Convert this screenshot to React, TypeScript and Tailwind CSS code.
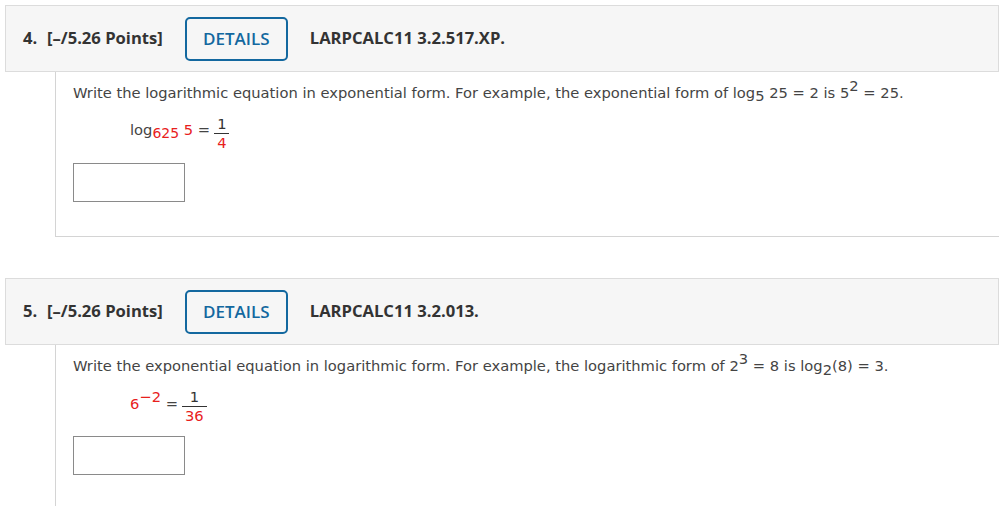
import React from 'react'

const body = { fontFamily: '"DejaVu Sans", Verdana, sans-serif' }

function Header({ num, code }: { num: string; code: string }) {
  return (
    <div
      className="flex items-center h-[67px] border border-[#dcdcdc] bg-[#f6f6f6] pl-[17px] text-[#333]"
      style={{ fontFamily: '"Open Sans", sans-serif' }}
    >
      <span className="font-bold text-[16.6px] w-[24px]">{num}</span>
      <span className="font-bold text-[16.6px]">[–/5.26 Points]</span>
      <button className="ml-[22px] h-[44px] w-[103px] rounded-[5px] border-2 border-[#13689f] text-[#13689f] text-[17px] font-semibold bg-transparent">
        DETAILS
      </button>
      <span className="ml-[22px] font-bold text-[16.6px]">{code}</span>
    </div>
  )
}

function Frac({ top, bottom }: { top: React.ReactNode; bottom: React.ReactNode }) {
  return (
    <span className="inline-flex flex-col items-center mx-[4px]">
      <span className="px-[3px] leading-[18px] text-[#333]">{top}</span>
      <span className="px-[3px] leading-[18px] border-t border-[#333] text-[#e8201c]">{bottom}</span>
    </span>
  )
}

function Answer() {
  return <div className="mt-[10px] w-[112px] h-[39px] border border-[#8a8a8a] bg-white" />
}

export default function App() {
  return (
    <div className="bg-white min-h-screen pt-[5px] pl-[5px] overflow-hidden" style={body}>
      <Header num="4." code="LARPCALC11 3.2.517.XP." />
      <div className="ml-[50px] border-l border-b border-[#d4d4d4] pl-[17px] pt-[11px] h-[165px] text-[#444] text-[14.7px]">
        <p className="leading-[20px] h-[20px] whitespace-nowrap">
          Write the logarithmic equation in exponential form. For example, the exponential form of log
          <sub className="text-[14.7px] relative top-[3px]">5</sub> 25 = 2 is 5<sup className="text-[14.7px]">2</sup> = 25.
        </p>
        <div className="mt-[10px] ml-[57px] flex items-center h-[40px]">
          <span className="mb-[6px]">
            log<sub className="text-[14px] text-[#e8201c]">625</sub>
            <span className="text-[#e8201c]"> 5</span> ={' '}
          </span>
          <Frac top="1" bottom="4" />
        </div>
        <Answer />
      </div>
      <div className="h-[41px]" />
      <Header num="5." code="LARPCALC11 3.2.013." />
      <div className="ml-[50px] border-l border-[#d4d4d4] pl-[17px] pt-[11px] h-[200px] text-[#444] text-[14.7px]">
        <p className="leading-[20px] h-[20px] whitespace-nowrap">
          Write the exponential equation in logarithmic form. For example, the logarithmic form of 2
          <sup className="text-[14.7px]">3</sup> = 8 is log<sub className="text-[14.7px]">2</sub>(8) = 3.
        </p>
        <div className="mt-[10px] ml-[57px] flex items-center h-[40px]">
          <span className="mb-[4px]">
            <span className="text-[#e8201c]">
              6<sup className="text-[14.7px]">−2</sup>
            </span>{' '}
            ={' '}
          </span>
          <Frac top="1" bottom="36" />
        </div>
        <Answer />
      </div>
    </div>
  )
}
